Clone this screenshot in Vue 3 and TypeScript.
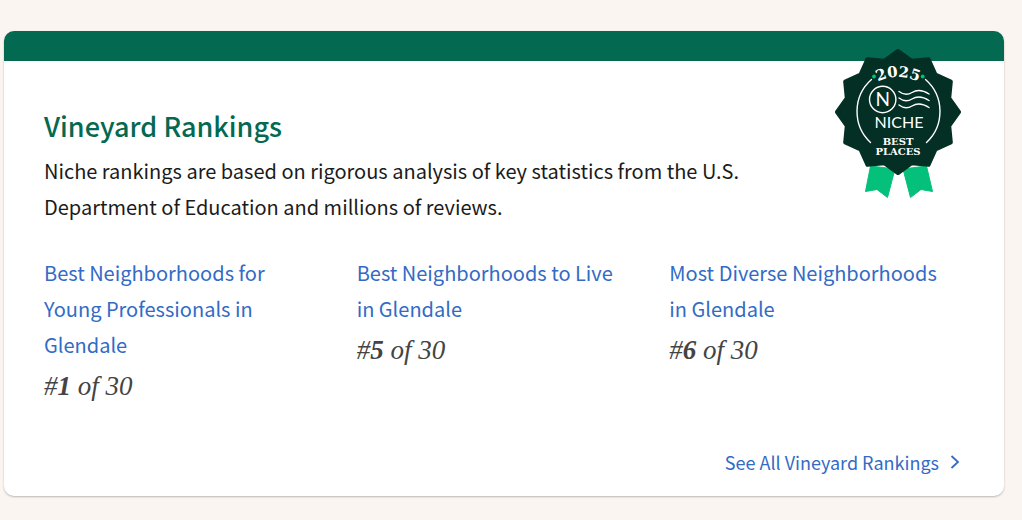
<script setup lang="ts">
interface Ranking {
  title: string
  rank: number
  total: number
}

const rankings: Ranking[] = [
  { title: 'Best Neighborhoods for Young Professionals in Glendale', rank: 1, total: 30 },
  { title: 'Best Neighborhoods to Live in Glendale', rank: 5, total: 30 },
  { title: 'Most Diverse Neighborhoods in Glendale', rank: 6, total: 30 },
]

// Twelve-pointed seal: tips and valleys alternate every 15 degrees.
const sealPoints: string = Array.from({ length: 24 }, (_, i) => {
  const radius = i % 2 === 0 ? 61 : 53
  const angle = (i * Math.PI) / 12
  const x = 63 + radius * Math.sin(angle)
  const y = 63 - radius * Math.cos(angle)
  return `${x.toFixed(2)},${y.toFixed(2)}`
}).join(' ')
</script>

<template>
  <section class="card" aria-labelledby="rankings-title">
    <div class="bar"></div>
    <svg class="badge" viewBox="0 0 126 150" role="img" aria-label="2025 Niche Best Places">
      <g class="ribbon">
        <path d="M35.5 117 L30.5 142.5 L42 140.5 L52.5 148.5 L60 120 Z" />
        <path d="M91.5 117 L97.5 142.5 L86 140.5 L75.5 148.5 L68 120 Z" />
      </g>
      <polygon class="seal" :points="sealPoints" />
      <path class="ring" d="M36.5 30.5 A42.5 42.5 0 0 0 35.5 93.5" />
      <path class="ring" d="M90.5 30.5 A42.5 42.5 0 0 1 91.5 93.5" />
      <circle class="dot" cx="39" cy="27.5" r="1.9" />
      <circle class="dot" cx="87.7" cy="27.5" r="1.9" />
      <path id="year-arc" d="M17 74 A46 46 0 0 1 109 74" fill="none" />
      <text class="year"><textPath href="#year-arc" startOffset="50%">2025</textPath></text>
      <circle class="line" cx="47.7" cy="50.5" r="13.2" />
      <text class="initial" x="47.7" y="57">N</text>
      <path class="line" d="M64 42.5 C68 45.5 72 46.5 77 43.5 C82 40.5 87 40.5 94 45" />
      <path class="line" d="M64 49 C68 52 72 53 77 50 C82 47 87 47 94 51.5" />
      <path class="line" d="M64 56 C68 59 72 60 77 57 C82 54 87 54 94 58.5" />
      <text class="brand" x="64" y="79">NICHE</text>
      <text class="award" x="63" y="96">BEST</text>
      <text class="award" x="63" y="106">PLACES</text>
    </svg>
    <div class="body">
      <h2 id="rankings-title">Vineyard Rankings</h2>
      <p class="intro">
        Niche rankings are based on rigorous analysis of key statistics from the U.S. Department of
        Education and millions of reviews.
      </p>
      <ul class="rankings">
        <li v-for="item in rankings" :key="item.title">
          <a href="#">{{ item.title }}</a>
          <p class="rank">#<strong>{{ item.rank }}</strong> of {{ item.total }}</p>
        </li>
      </ul>
      <div class="footer">
        <a class="all" href="#">
          <span>See All Vineyard Rankings</span>
          <svg class="chevron" viewBox="0 0 10 16" aria-hidden="true">
            <path d="M1.5 2 L8 8 L1.5 14" />
          </svg>
        </a>
      </div>
    </div>
  </section>
</template>

<style>
body {
  background: #faf5f1;
}
</style>

<style scoped>
.card {
  position: relative;
  margin: 31px 18px 24px 4px;
  border-radius: 10px;
  background: #fff;
  box-shadow: 0 1px 2px rgba(0, 0, 0, 0.25);
  color: #1b1b1b;
  font-family: "Noto Sans CJK SC", "Noto Sans", sans-serif;
  font-size: 20px;
  line-height: 36px;
}

.bar {
  height: 30px;
  border-radius: 10px 10px 0 0;
  background: #036951;
}

.badge {
  position: absolute;
  top: 18px;
  right: 43px;
  width: 126px;
  height: 150px;
}

.ribbon {
  fill: #05c07a;
  stroke: #05c07a;
  stroke-width: 1;
  stroke-linejoin: round;
}

.seal {
  fill: #032f24;
  stroke: #032f24;
  stroke-width: 4;
  stroke-linejoin: round;
}

.ring,
.line {
  fill: none;
  stroke: #fff;
  stroke-width: 1.4;
  stroke-linecap: round;
}

.dot {
  fill: #05c07a;
}

.badge text {
  fill: #fff;
  text-anchor: middle;
}

.badge .year {
  font: 700 15px "DejaVu Serif", serif;
}

.badge .initial {
  font: 400 19px Lato, sans-serif;
}

.badge .brand {
  font: 400 16px Lato, sans-serif;
}

.badge .award {
  font: 700 10px "DejaVu Serif", serif;
}

.body {
  padding: 45px 40px 16px;
}

h2 {
  margin: 0;
  color: #036951;
  font-size: 27px;
  font-weight: 500;
  line-height: 40px;
}

.intro {
  margin: 7px 160px 0 0;
}

.rankings {
  display: grid;
  grid-template-columns: repeat(3, 1fr);
  gap: 40px;
  margin: 30px 0 0;
  padding: 0 22px 0 0;
  list-style: none;
}

a {
  color: #326bc5;
  text-decoration: none;
}

.rank {
  margin: 5px 0 0;
  color: #444;
  font: italic 27px/36px "Liberation Serif", serif;
}

.footer {
  display: flex;
  justify-content: flex-end;
  margin-top: 40px;
  padding-right: 4px;
}

.all {
  display: flex;
  align-items: center;
  gap: 11px;
  font-size: 18px;
}

.chevron {
  width: 10px;
  height: 16px;
  fill: none;
  stroke: #326bc5;
  stroke-width: 1.8;
}
</style>
